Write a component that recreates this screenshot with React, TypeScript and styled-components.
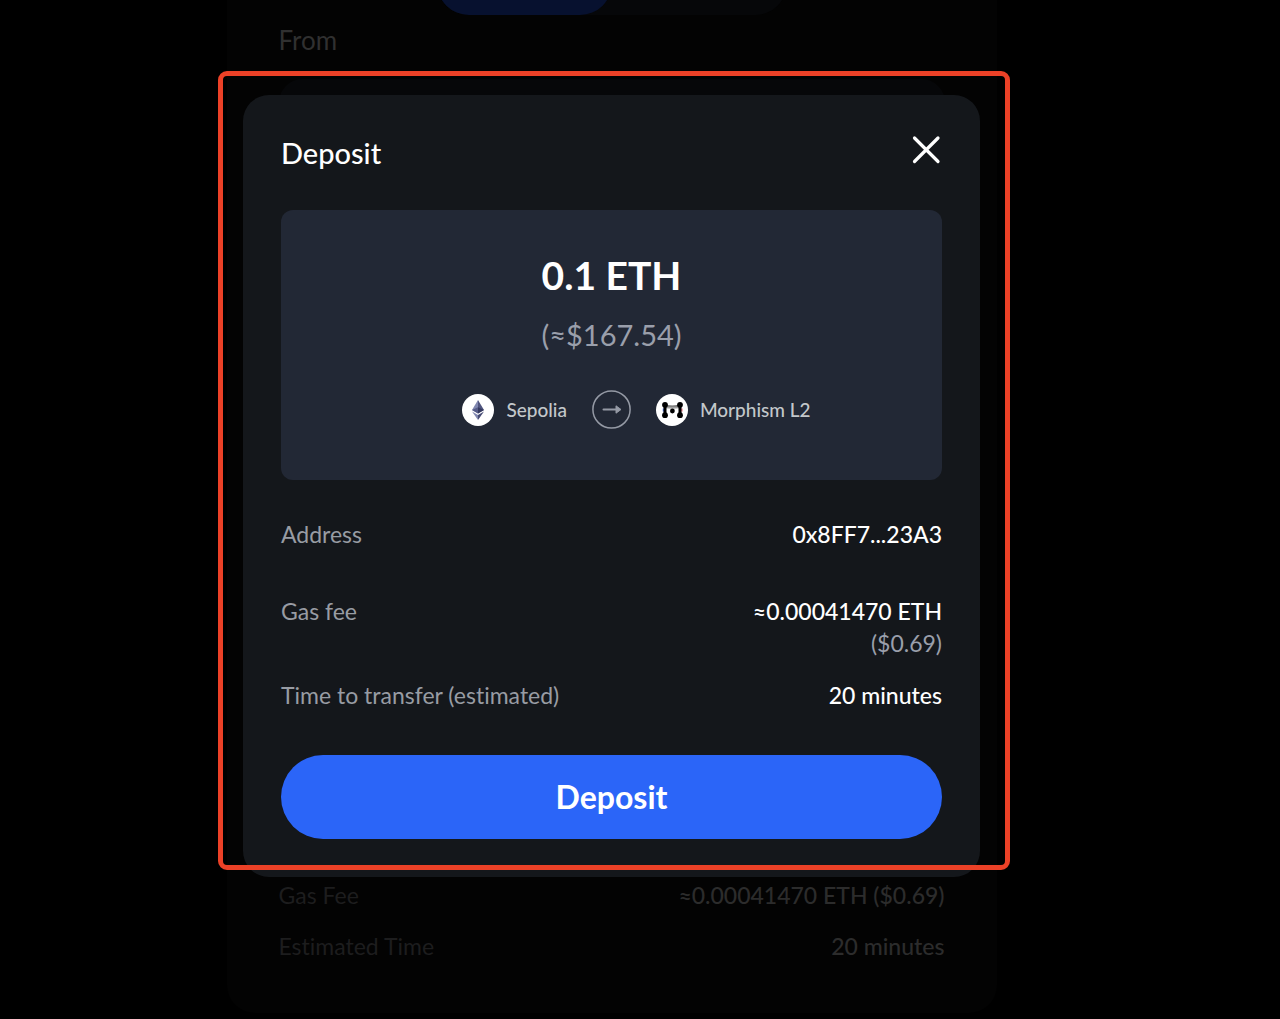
import React from "react";
import styled, { createGlobalStyle } from "styled-components";

const GlobalStyle = createGlobalStyle`
  *, *::before, *::after { box-sizing: border-box; }
  body {
    margin: 0;
    background: #000;
    color: #fff;
    font-family: Lato, "Noto Sans", sans-serif;
    font-variant-ligatures: none;
  }
  h1, p, dl, dd { margin: 0; }
`;

const Page = styled.div`
  position: relative;
  min-height: 100vh;
  overflow: hidden;
  padding-right: 57px;
`;

const BridgePanel = styled.main`
  width: 100%;
  max-width: 770px;
  margin: 0 auto;
  padding: 0 52px 51px;
  border-radius: 0 0 28px 28px;
  background: #030303;
`;

const TabsViewport = styled.div`
  display: flex;
  justify-content: center;
  align-items: flex-end;
  height: 15px;
  overflow: hidden;
`;

const Tabs = styled.div`
  display: flex;
  flex: none;
  width: 350px;
  height: 64px;
  border-radius: 32px;
  background: #060709;
`;

const Tab = styled.button<{ $active?: boolean }>`
  flex: 1;
  border: 0;
  border-radius: 32px;
  background: ${(p) => (p.$active ? "#07112f" : "transparent")};
`;

const FromLabel = styled.p`
  margin-top: 9px;
  font-size: 26px;
  line-height: 32px;
  color: #303030;
`;

const FromBox = styled.section`
  height: 770px;
  margin: 23px 0 30px;
  border-radius: 24px;
  background: linear-gradient(#060709 240px, #030303 240px);
`;

const Details = styled.dl<{ $gap: number }>`
  display: flex;
  flex-direction: column;
  gap: ${(p) => p.$gap}px;
`;

const Row = styled.div`
  display: flex;
  justify-content: space-between;
  font-size: 23px;
  line-height: 32px;
`;

const DimTerm = styled.dt`
  color: #1d1d1e;
`;

const DimValue = styled.dd`
  color: #2c2c2c;
  font-weight: 500;
`;

const Overlay = styled.div`
  position: absolute;
  inset: 0;
  display: flex;
  justify-content: center;
  align-items: flex-start;
  padding: 95px 57px 0 0;
`;

const Modal = styled.section`
  position: relative;
  width: 100%;
  max-width: 737px;
  padding: 38px 38px 38px;
  border-radius: 26px;
  background: #14171b;
`;

const Highlight = styled.div`
  position: absolute;
  inset: -24px -30px 7px -25px;
  border: 5px solid #ec4127;
  border-radius: 9px;
  pointer-events: none;
`;

const Header = styled.header`
  display: flex;
  justify-content: space-between;
  align-items: flex-start;
  height: 77px;
`;

const Title = styled.h1`
  font-size: 29px;
  line-height: 40px;
  font-weight: 500;
`;

const CloseButton = styled.button`
  display: flex;
  padding: 0;
  border: 0;
  background: none;
  color: #fff;
  cursor: pointer;
`;

const Summary = styled.div`
  display: flex;
  flex-direction: column;
  align-items: center;
  padding: 39px 0 51px;
  border-radius: 12px;
  background: #222835;
`;

const Amount = styled.p`
  font-size: 39px;
  line-height: 52px;
  font-weight: 700;
`;

const Fiat = styled.p`
  margin: 14px 0 35px;
  font-size: 29px;
  line-height: 40px;
  color: #9a9fab;
`;

const Route = styled.div`
  display: flex;
  align-items: center;
  gap: 25px;
  padding-left: 50px;
`;

const Chain = styled.span`
  display: flex;
  align-items: center;
  gap: 12px;
  font-size: 19px;
  line-height: 26px;
  font-weight: 500;
  color: #c3c7ca;
`;

const Info = styled.dl`
  padding: 38px 0 44px;
`;

const InfoRow = styled(Row)<{ $space?: number }>`
  margin-bottom: ${(p) => p.$space ?? 0}px;
`;

const Term = styled.dt`
  color: #989ca3;
`;

const Value = styled.dd`
  text-align: right;
  font-weight: 500;
`;

const Note = styled.span`
  display: block;
  font-weight: 400;
  color: #9a9fab;
`;

const SubmitButton = styled.button`
  display: block;
  width: 100%;
  height: 84px;
  border: 0;
  border-radius: 42px;
  background: #2b65f8;
  color: #fff;
  font-family: inherit;
  font-size: 32px;
  line-height: 44px;
  font-weight: 700;
  cursor: pointer;
`;

const CloseIcon = () => (
  <svg width="32" height="32" viewBox="0 0 32 32" fill="none" stroke="currentColor" strokeWidth="3.2" strokeLinecap="round">
    <path d="M4.5 5 28 28.5M28 5 4.5 28.5" />
  </svg>
);

const EthereumIcon = () => (
  <svg width="32" height="32" viewBox="0 0 32 32">
    <circle cx="16" cy="16" r="16" fill="#fff" />
    <path d="M16 6 10 16l6 3.6z" fill="#8087b0" />
    <path d="m16 6 6 10-6 3.6z" fill="#50557f" />
    <path d="m10 16 6-2.7v6.3z" fill="#565c88" />
    <path d="m22 16-6-2.7v6.3z" fill="#353a60" />
    <path d="m10 17.6 6 3.5V26z" fill="#8087b0" />
    <path d="m22 17.6-6 3.5V26z" fill="#464b74" />
  </svg>
);

const ArrowIcon = () => (
  <svg width="39" height="39" viewBox="0 0 39 39" fill="none" stroke="#959aa5">
    <circle cx="19.5" cy="19.5" r="18.6" strokeWidth="1.5" />
    <path d="M11.5 19.5H25" strokeWidth="2" strokeLinecap="round" />
    <path d="m24 15.8 5 3.7-5 3.7z" fill="#959aa5" strokeWidth="1" strokeLinejoin="round" />
  </svg>
);

const MorphismIcon = () => (
  <svg width="32" height="32" viewBox="0 0 32 32">
    <defs>
      <linearGradient id="bar" x1="0" y1="0" x2="0" y2="1">
        <stop offset="0" stopColor="#444" />
        <stop offset="1" stopColor="#ccc" />
      </linearGradient>
    </defs>
    <circle cx="16" cy="16" r="16" fill="#fff" />
    <path d="M9 10.5Q16 12.5 24 10.5v3.7q-8 1.4-15 0z" fill="url(#bar)" />
    <path d="M7.3 14.5v3" stroke="#2f5bea" />
    <path d="M25.9 14.5v3" stroke="#e33b4e" />
    <path d="M9 11v10M24 11v10" stroke="#000" strokeWidth="3" />
    <circle cx="9" cy="10.8" r="2.9" />
    <circle cx="24" cy="10.8" r="2.9" />
    <circle cx="9" cy="21.2" r="2.9" />
    <circle cx="24" cy="21.2" r="2.9" />
    <circle cx="16.4" cy="17" r="2.4" />
  </svg>
);

export default function App() {
  return (
    <Page>
      <GlobalStyle />
      <BridgePanel>
        <TabsViewport>
          <Tabs>
            <Tab type="button" $active />
            <Tab type="button" />
          </Tabs>
        </TabsViewport>
        <FromLabel>From</FromLabel>
        <FromBox />
        <Details $gap={19}>
          <Row>
            <DimTerm>Gas Fee</DimTerm>
            <DimValue>≈0.00041470 ETH ($0.69)</DimValue>
          </Row>
          <Row>
            <DimTerm>Estimated Time</DimTerm>
            <DimValue>20 minutes</DimValue>
          </Row>
        </Details>
      </BridgePanel>
      <Overlay>
        <Modal role="dialog" aria-labelledby="deposit-title">
          <Header>
            <Title id="deposit-title">Deposit</Title>
            <CloseButton type="button" aria-label="Close">
              <CloseIcon />
            </CloseButton>
          </Header>
          <Summary>
            <Amount>0.1 ETH</Amount>
            <Fiat>(≈$167.54)</Fiat>
            <Route>
              <Chain>
                <EthereumIcon />
                Sepolia
              </Chain>
              <ArrowIcon />
              <Chain>
                <MorphismIcon />
                Morphism L2
              </Chain>
            </Route>
          </Summary>
          <Info>
            <InfoRow $space={45}>
              <Term>Address</Term>
              <Value>0x8FF7...23A3</Value>
            </InfoRow>
            <InfoRow $space={20}>
              <Term>Gas fee</Term>
              <Value>
                ≈0.00041470 ETH
                <Note>($0.69)</Note>
              </Value>
            </InfoRow>
            <InfoRow>
              <Term>Time to transfer (estimated)</Term>
              <Value>20 minutes</Value>
            </InfoRow>
          </Info>
          <SubmitButton type="button">Deposit</SubmitButton>
          <Highlight />
        </Modal>
      </Overlay>
    </Page>
  );
}
